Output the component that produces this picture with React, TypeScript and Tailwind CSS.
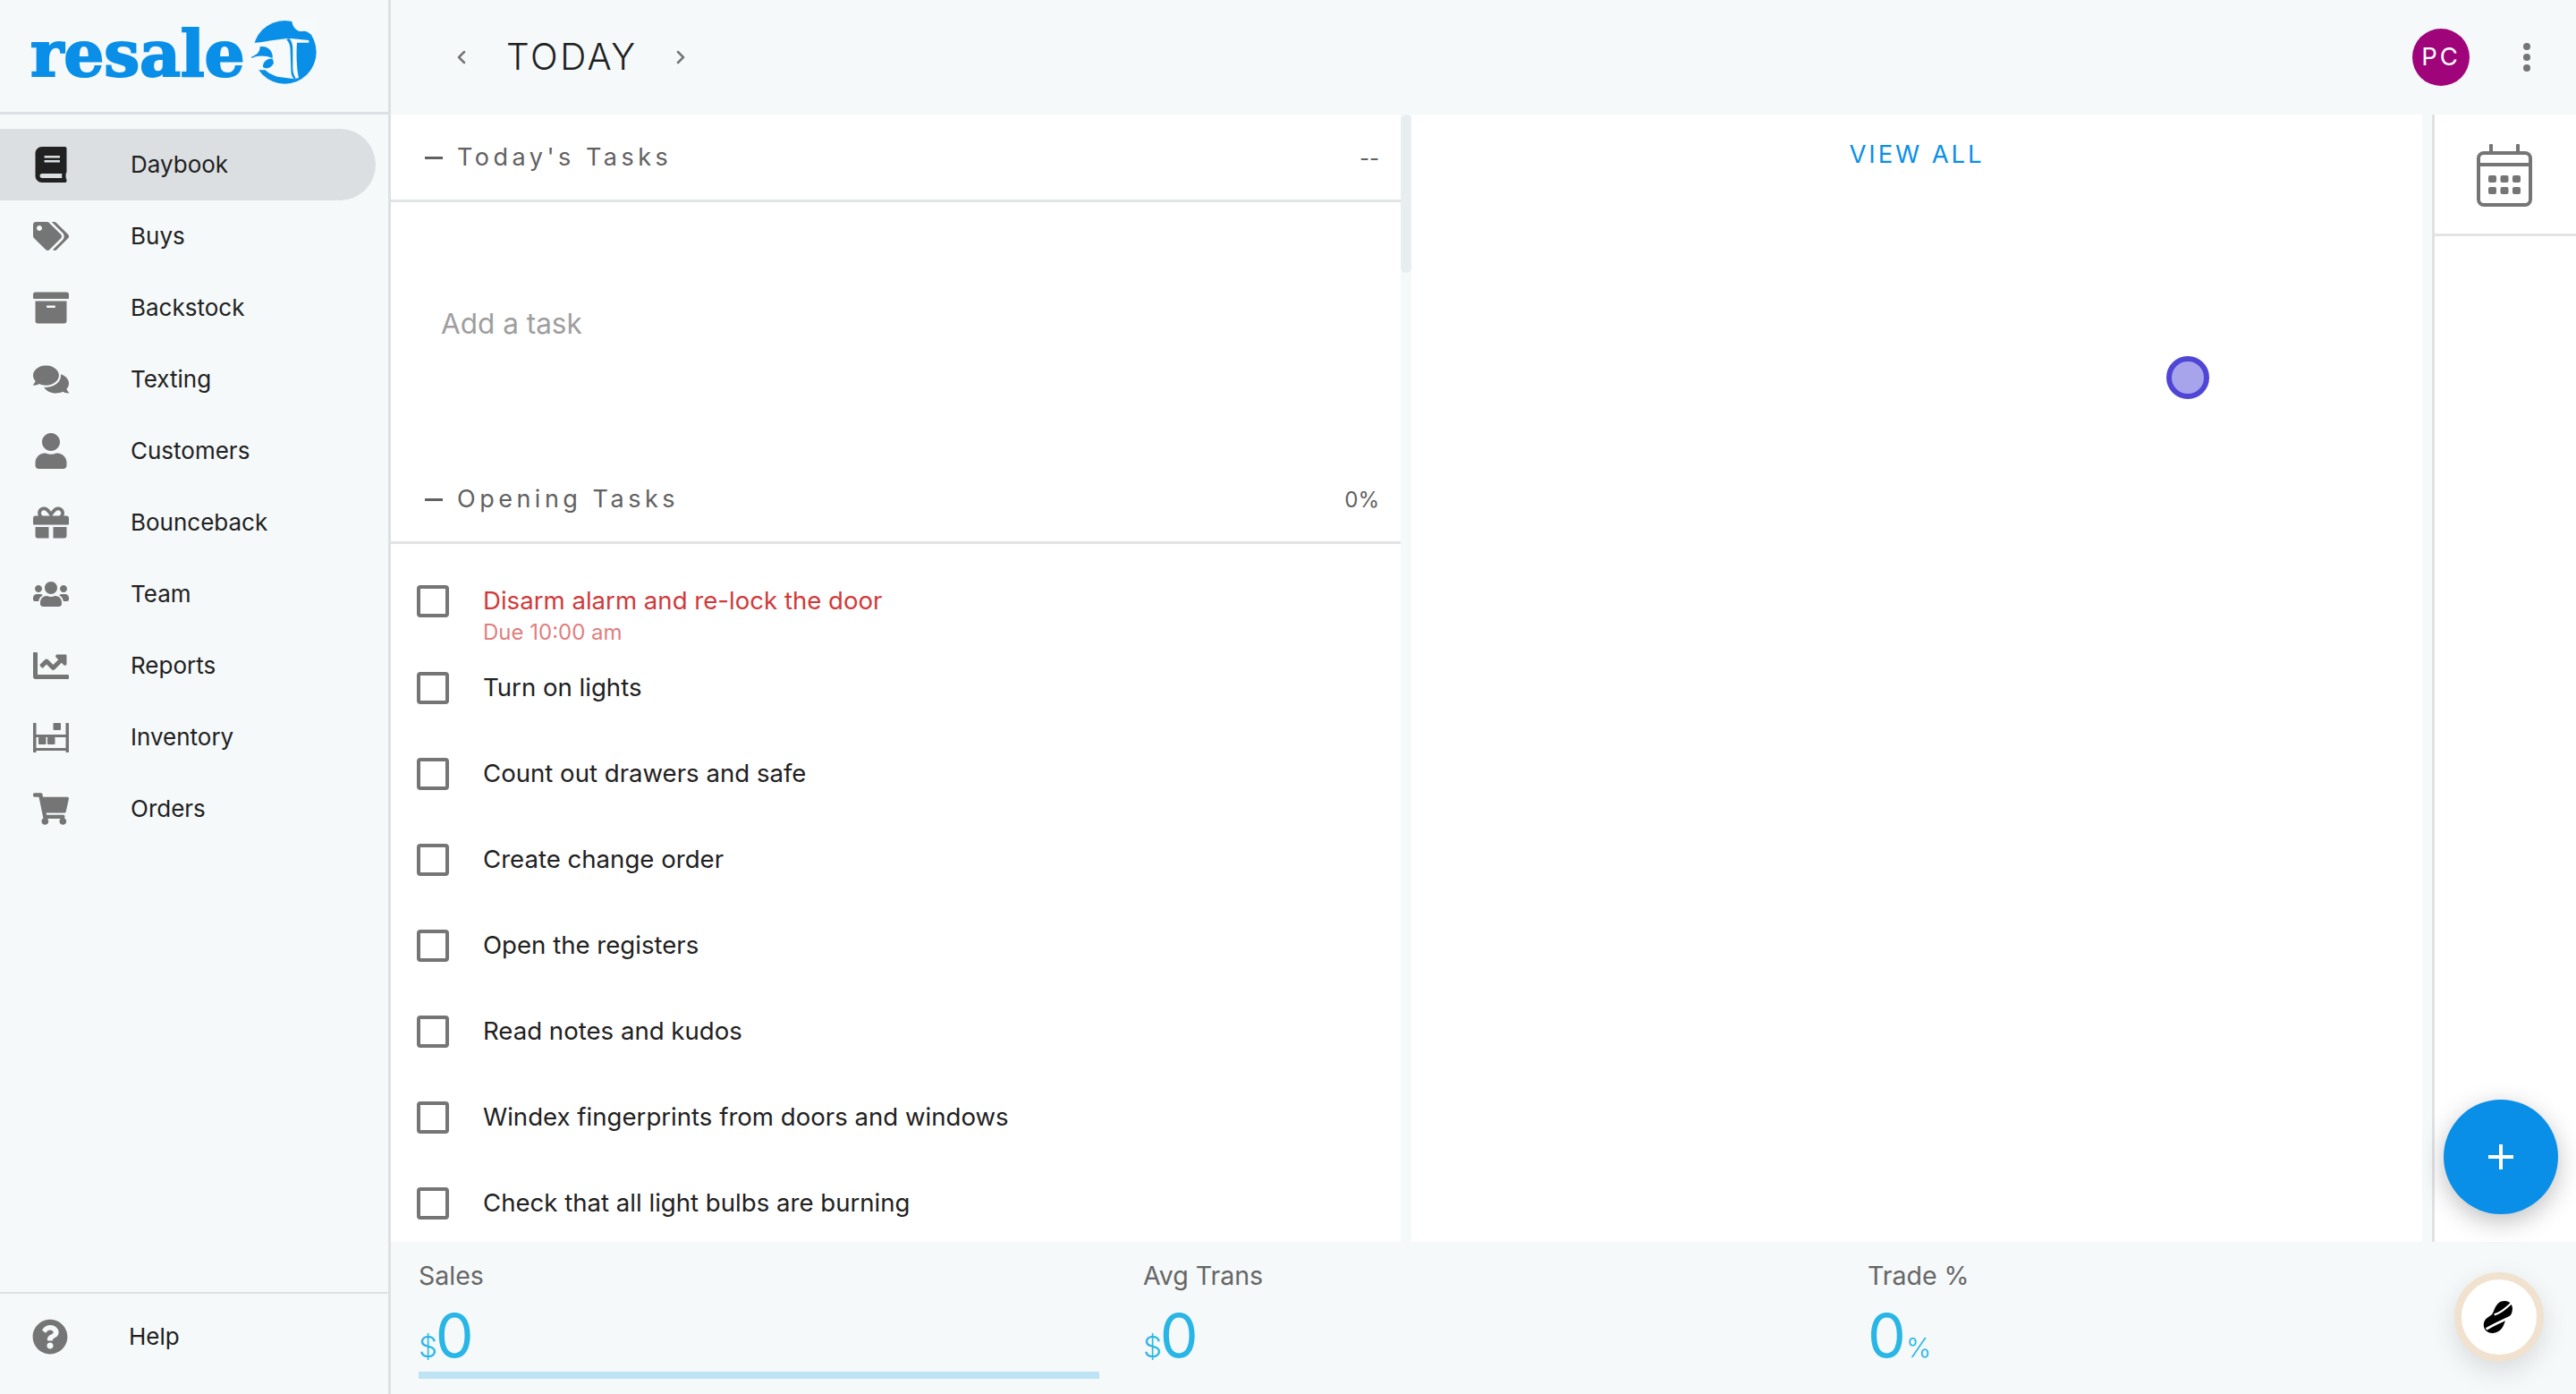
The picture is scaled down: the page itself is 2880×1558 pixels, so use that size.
import React from "react";
import {
  FaBook,
  FaTags,
  FaArchive,
  FaComments,
  FaUser,
  FaGift,
  FaUsers,
  FaChartLine,
  FaShoppingCart,
  FaQuestionCircle,
} from "react-icons/fa";
import { ChevronLeft, ChevronRight } from "lucide-react";

function InventoryIcon() {
  return (
    <svg viewBox="0 0 40 33" className="w-[40px] h-[33px]" fill="#757575">
      <rect x="0" y="0" width="3.5" height="33" rx="0.5" />
      <rect x="36.5" y="0" width="3.5" height="33" rx="0.5" />
      <rect x="0" y="13" width="40" height="3" />
      <rect x="0" y="28" width="40" height="3" />
      <rect x="22.5" y="0" width="8.5" height="8" rx="1" />
      <rect x="6" y="16" width="8.5" height="8" rx="1" />
      <rect x="16" y="16" width="8.5" height="8" rx="1" />
    </svg>
  );
}

function LogoMark() {
  return (
    <svg viewBox="0 0 285 270" className="w-[95px] h-[90px] shrink-0 overflow-visible">
      <circle cx="145" cy="130" r="106" fill="#0a8fe8" />
      {/* bite at the top right, the dot of the i */}
      <path d="M168 20 C170 45 185 62 205 60 C215 58 222 62 232 70 L262 20 Z" fill="#f6fafb" />
      {/* a + i letter shape knocked out of the disc */}
      <path
        d="M20 98 C60 102 110 85 165 84 L226 90 L226 98 L186 98 C184 130 184 180 192 216 L178 220 L120 212 C100 205 90 200 80 190 L20 190 Z"
        fill="#f6fafb"
      />
      <path
        d="M150 88 C160 95 164 110 164 130 L166 190 C166 205 170 214 176 220 L182 218 C174 205 172 195 172 180 L172 120 C172 105 168 92 161 84 Z"
        fill="#0a8fe8"
      />
      <path d="M33 146 C50 140 62 130 62 112 C80 108 100 118 104 140 L104 150 C80 140 55 140 33 150 Z" fill="#0a8fe8" />
      <path d="M104 152 C85 150 70 165 72 180 C85 190 104 180 108 165 Z" fill="#0a8fe8" />
    </svg>
  );
}

function PeanutIcon() {
  return (
    <svg viewBox="0 0 40 42" className="w-[36px] h-[40px]">
      <path
        d="M27 1 C35 1 38 8 36 15 C35 20 30 22 28 25 C26 30 24 40 12 41 C4 41 0 35 1 29 C2 23 7 21 11 18 C14 15 15 1 27 1 Z"
        fill="#000000"
      />
      <path d="M14 18 C22 16 30 9 36 3" stroke="#ffffff" strokeWidth="2.5" fill="none" />
      <path d="M4 36 C14 30 24 26 34 21" stroke="#ffffff" strokeWidth="3" fill="none" />
    </svg>
  );
}

function CalendarIcon() {
  return (
    <svg viewBox="0 0 62 70" className="w-[62px] h-[70px]" fill="#757575">
      <rect x="2" y="10" width="58" height="58" rx="6" fill="none" stroke="#757575" strokeWidth="4" />
      <rect x="2" y="21" width="58" height="4" />
      <rect x="14" y="0" width="4" height="12" rx="1" />
      <rect x="44" y="0" width="4" height="12" rx="1" />
      <rect x="13" y="35" width="9" height="8" rx="2" />
      <rect x="26.5" y="35" width="9" height="8" rx="2" />
      <rect x="40" y="35" width="9" height="8" rx="2" />
      <rect x="13" y="48" width="9" height="8" rx="2" />
      <rect x="26.5" y="48" width="9" height="8" rx="2" />
      <rect x="40" y="48" width="9" height="8" rx="2" />
    </svg>
  );
}

const navItems = [
  { label: "Daybook", icon: <FaBook size={40} color="#212121" />, active: true },
  { label: "Buys", icon: <FaTags size={40} color="#757575" /> },
  { label: "Backstock", icon: <FaArchive size={40} color="#757575" /> },
  { label: "Texting", icon: <FaComments size={40} color="#757575" /> },
  { label: "Customers", icon: <FaUser size={40} color="#757575" /> },
  { label: "Bounceback", icon: <FaGift size={40} color="#757575" /> },
  { label: "Team", icon: <FaUsers size={40} color="#757575" /> },
  { label: "Reports", icon: <FaChartLine size={40} color="#757575" /> },
  { label: "Inventory", icon: <InventoryIcon /> },
  { label: "Orders", icon: <FaShoppingCart size={40} color="#757575" /> },
];

const tasks = [
  "Turn on lights",
  "Count out drawers and safe",
  "Create change order",
  "Open the registers",
  "Read notes and kudos",
  "Windex fingerprints from doors and windows",
  "Check that all light bulbs are burning",
];

function Sidebar() {
  return (
    <aside className="w-[437px] shrink-0 h-full flex flex-col border-r-[3px] border-[#dde1e3]">
      <div className="h-[128px] shrink-0 border-b-[3px] border-[#dde1e3] flex items-start pl-[34px] pt-[15px]">
        <span className="mt-[9px] font-['DejaVu_Serif'] font-bold text-[#0a8fe8] text-[71px] leading-[72px] tracking-[-0.2px] [-webkit-text-stroke:2px_#0a8fe8] w-[236px] shrink-0 whitespace-nowrap">
          resale
        </span>
        <LogoMark />
      </div>
      <nav className="pt-[16px] flex-1">
        {navItems.map((item) => (
          <div
            key={item.label}
            className={
              item.active
                ? "h-[80px] w-[420px] rounded-r-full bg-[#dcdfe1] flex items-center"
                : "h-[80px] w-[420px] flex items-center"
            }
          >
            <div className="w-[146px] shrink-0 pl-[37px] flex items-center">
              <div className="w-[40px] flex justify-center">{item.icon}</div>
            </div>
            <span className="text-[26px] text-[#212121] mt-[-2px]">{item.label}</span>
          </div>
        ))}
      </nav>
      <div className="h-[114px] shrink-0 border-t-[2px] border-[#dde1e3] flex items-center pl-[36px] pb-[16px]">
        <FaQuestionCircle size={40} color="#757575" />
        <span className="ml-[68px] text-[26px] text-[#212121] mt-[-2px]">Help</span>
      </div>
    </aside>
  );
}

function SectionHeader(props: { title: string; value: string }) {
  return (
    <div className="h-[98px] shrink-0 border-b-[3px] border-[#e2e3e4] flex items-center pl-[38px] pr-[24px] pt-[2px]">
      <span className="w-[20px] h-[3px] bg-[#616161] mr-[16px]" />
      <span className="text-[27px] text-[#616161] tracking-[4.5px] flex-1">{props.title}</span>
      <span className="text-[24px] text-[#616161]">{props.value}</span>
    </div>
  );
}

function Checkbox() {
  return <span className="block w-[36px] h-[36px] shrink-0 rounded-[4px] border-[4px] border-[#757575] bg-white" />;
}

function TaskColumn() {
  return (
    <div className="w-[1129px] shrink-0 bg-white flex flex-col overflow-hidden">
      <SectionHeader title="Today's Tasks" value="--" />
      <div className="h-[284px] shrink-0 pl-[56px] pt-[116px]">
        <span className="block text-[31.5px] leading-[40px] text-[#9e9e9e]">Add a task</span>
      </div>
      <SectionHeader title="Opening Tasks" value="0%" />
      <div className="pt-[40px] pl-[29px]">
        <div className="h-[73px] flex items-start">
          <div className="mt-[6px] shrink-0">
            <Checkbox />
          </div>
          <div className="ml-[38px]">
            <div className="text-[27.6px] leading-[36px] text-[#d13a3a] mt-[5px]">Disarm alarm and re-lock the door</div>
            <div className="text-[24px] leading-[32px] text-[#e07f7f] mt-[2px]">Due 10:00 am</div>
          </div>
        </div>
        {tasks.map((t) => (
          <div key={t} className="h-[96px] flex items-center">
            <Checkbox />
            <span className="ml-[38px] text-[27.6px] text-[#212121]">{t}</span>
          </div>
        ))}
      </div>
    </div>
  );
}

function Stat(props: { label: string; prefix?: string; suffix?: string; bar?: boolean }) {
  return (
    <div className="w-[810px] shrink-0 pr-[49px]">
      <div className="text-[28.5px] leading-[40px] text-[#666666] mt-[18px]">{props.label}</div>
      <div className="h-[74px] mt-[9px] flex items-baseline text-[#29b6e6]">
        {props.prefix && <span className="text-[33px] leading-[74px] font-light mr-[-2px]">{props.prefix}</span>}
        <span className="text-[68px] leading-[74px] font-normal">0</span>
        {props.suffix && <span className="text-[30px] leading-[74px] font-light">{props.suffix}</span>}
      </div>
      {props.bar && <div className="h-[8px] mt-[4px] bg-[#bde3f4]" />}
    </div>
  );
}

export default function App() {
  return (
    <div className="relative w-[2880px] h-[1558px] overflow-hidden flex bg-[#f5f9fa] font-['Inter',sans-serif]">
      <Sidebar />
      <main className="flex-1 min-w-0 h-full flex flex-col">
        <header className="h-[128px] shrink-0 flex items-center">
          <ChevronLeft size={24} color="#757575" strokeWidth={2.5} className="ml-[67px]" />
          <span className="ml-[38px] text-[40.3px] text-[#212121] font-light tracking-[2.6px]">TODAY</span>
          <ChevronRight size={24} color="#757575" strokeWidth={2.5} className="ml-[36px]" />
          <div className="ml-auto mr-[119px] w-[64px] h-[64px] rounded-full bg-[#a0047a] text-white text-[27.5px] tracking-[3px] flex items-center justify-center">
            PC
          </div>
          <div className="absolute right-[51px] top-[48px] flex flex-col gap-[4px]">
            <span className="w-[8px] h-[8px] rounded-full bg-[#757575]" />
            <span className="w-[8px] h-[8px] rounded-full bg-[#757575]" />
            <span className="w-[8px] h-[8px] rounded-full bg-[#757575]" />
          </div>
        </header>
        <div className="h-[1260px] shrink-0 flex">
          <TaskColumn />
          <div className="w-[12px] shrink-0">
            <div className="h-[177px] rounded-full bg-[#e8edf0]" />
          </div>
          <div className="w-[1130px] shrink-0 bg-white flex justify-center pt-[26px]">
            <span className="text-[27.5px] leading-[36px] text-[#0a8fe8] tracking-[2.9px]">VIEW ALL</span>
          </div>
          <div className="w-[11px] shrink-0" />
          <div className="flex-1 bg-white border-l-[3px] border-[#dfe1e2]">
            <div className="h-[136px] border-b-[3px] border-[#e2e3e4] flex justify-center items-center pr-[2px] pt-[2px]">
              <CalendarIcon />
            </div>
          </div>
        </div>
        <div className="flex-1 flex pl-[31px]">
          <Stat label="Sales" prefix="$" bar />
          <Stat label="Avg Trans" prefix="$" />
          <Stat label="Trade %" suffix="%" />
        </div>
      </main>
      <div className="absolute left-[2422px] top-[398px] w-[48px] h-[48px] rounded-full bg-[#a8a4ec] border-[6px] border-[#4f46d5]" />
      <div className="absolute left-[2732px] top-[1229px] w-[128px] h-[128px] rounded-full bg-[#0a8fe8] shadow-[0_8px_28px_rgba(0,0,0,0.25)] flex items-center justify-center">
        <svg viewBox="0 0 28 28" className="w-[28px] h-[28px]" fill="#ffffff">
          <rect x="12" y="0" width="4" height="28" />
          <rect x="0" y="12" width="28" height="4" />
        </svg>
      </div>
      <div className="absolute left-[2744px] top-[1422px] w-[100px] h-[100px] rounded-full bg-white border-[8px] border-[#f0e2cf] shadow-[0_10px_30px_rgba(0,0,0,0.12)] flex items-center justify-center">
        <PeanutIcon />
      </div>
    </div>
  );
}
